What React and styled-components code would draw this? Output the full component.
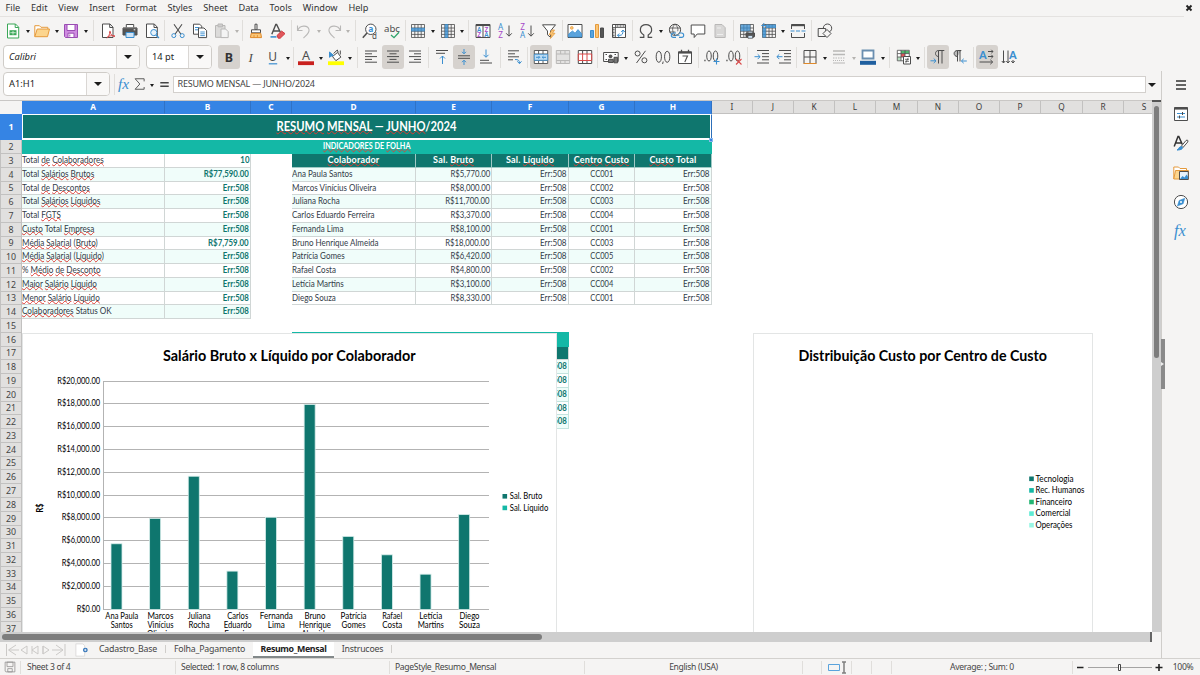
import React from "react";
import styled, { createGlobalStyle, css } from "styled-components";

const UI = '"Noto Sans", "Liberation Sans", sans-serif';
const CELL = 'Lato, "Liberation Sans", sans-serif';
const TEAL = "#0f766e";
const MINT = "#14b8a6";
const BLUE = "#3584e4";

const Global = createGlobalStyle`
  * { box-sizing: border-box; }
  body { margin: 0; background: #f5f4f3; font-family: ${UI}; color: #3a3a3a; }
`;

const Window = styled.div`
  width: 1200px;
  height: 675px;
  display: flex;
  flex-direction: column;
  overflow: hidden;
  background: #f5f4f3;
`;

/* ---------- menu bar ---------- */
const MenuBar = styled.nav`
  flex: none;
  height: 17px;
  margin-right: 16px;
  padding: 0 0 0 5.5px;
  display: flex;
  align-items: center;
  gap: 10.8px;
  border-bottom: 1px solid #e4e2e0;
  font-size: 9.2px;
  color: #333;
`;
const MenuItem = styled.span`
  white-space: nowrap;
  line-height: 16px;
`;
const CloseDoc = styled.span`
  margin-left: auto;
  margin-right: -10px;
  height: 16px;
  display: flex;
  align-items: center;
`;

/* ---------- toolbars ---------- */
const Toolbar = styled.div`
  display: flex;
  align-items: center;
  flex: none;
  height: ${(p) => p.$h}px;
  padding-left: ${(p) => p.$pad}px;
  margin-bottom: ${(p) => p.$after || 0}px;
`;
const ToolButton = styled.span`
  flex: none;
  width: ${(p) => p.$w || 22}px;
  height: 24px;
  border-radius: 3px;
  display: flex;
  align-items: center;
  justify-content: center;
  background: ${(p) => (p.$active ? "#d6d2ce" : "transparent")};
`;
const CaretSlot = styled.span`
  flex: none;
  width: ${(p) => p.$w || 7.2}px;
  display: flex;
  justify-content: center;
  padding-top: 2px;
`;
const CaretShape = styled.i`
  border: ${(p) => p.$s || 2.6}px solid transparent;
  border-top: ${(p) => (p.$s || 2.8) * 1.1}px solid ${(p) => (p.$off ? "#b5b3b0" : "#1c1c1c")};
  border-bottom: 0;
`;
const Sep = styled.span`
  flex: none;
  width: ${(p) => p.$w}px;
  height: 21px;
  display: flex;
  justify-content: center;
  &::after {
    content: "";
    width: 1px;
    background: #e0dedb;
  }
`;
const Combo = styled.span`
  flex: none;
  display: flex;
  width: ${(p) => p.$w}px;
  height: 24px;
  margin-right: ${(p) => p.$gap}px;
  border: 1px solid #cfccc8;
  border-radius: 4px;
  background: #fff;
  overflow: hidden;
  font-size: 9.3px;
  color: #262626;
`;
const ComboText = styled.span`
  flex: 1;
  padding-left: 5px;
  line-height: 21px;
  font-style: ${(p) => (p.$italic ? "italic" : "normal")};
`;
const ComboArrow = styled.span`
  width: ${(p) => p.$w}px;
  border-left: 1px solid #dad7d4;
  background: #f9f8f7;
  display: flex;
  align-items: center;
  justify-content: center;
`;

/* ---------- work area ---------- */
const Middle = styled.div`
  display: flex;
  flex: none;
  height: 587px;
`;
const Main = styled.div`
  width: 1162px;
  flex: none;
  border-right: 1px solid #cfcdca;
  display: flex;
  flex-direction: column;
`;
const FormulaBar = styled.div`
  flex: none;
  height: 29px;
  padding: 0 0 3px 3px;
  display: flex;
  align-items: center;
`;
const FormulaInput = styled.div`
  flex: none;
  width: 973px;
  height: 17px;
  margin-left: 1px;
  border: 1px solid #d3d0cd;
  background: #fff;
  padding-left: 3.5px;
  font-size: 9px;
  line-height: 14.5px;
  letter-spacing: -0.19px;
  color: #444;
`;
const SheetArea = styled.div`
  display: flex;
  flex: none;
  height: 532px;
`;
const Grid = styled.div`
  position: relative;
  width: 1152px;
  height: 532px;
  overflow: hidden;
  background: #fff;
`;
const HeaderRow = styled.div`
  display: flex;
  height: 14px;
  border-top: 1px solid #c9c7c5;
  background: #f5f4f3;
`;
const Corner = styled.div`
  width: 22px;
  flex: none;
`;
const ColHead = styled.div`
  flex: none;
  width: ${(p) => p.$w}px;
  height: 13px;
  text-align: center;
  font-size: 8.3px;
  line-height: 12px;
  font-weight: ${(p) => (p.$on ? 700 : 400)};
  color: ${(p) => (p.$on ? "#fff" : "#3c3c3c")};
  background: ${(p) => (p.$on ? BLUE : "#e1e0df")};
  border-right: 1px solid ${(p) => (p.$on ? "#2f72c6" : "#c2c1c0")};
  border-bottom: 1px solid ${(p) => (p.$on ? BLUE : "#c2c1c0")};
`;
const Row = styled.div`
  display: flex;
  height: ${(p) => p.$h}px;
`;
const RowHead = styled.div`
  flex: none;
  width: 22px;
  text-align: center;
  font-size: 8.8px;
  line-height: ${(p) => p.$h}px;
  font-weight: ${(p) => (p.$on ? 700 : 400)};
  color: ${(p) => (p.$on ? "#fff" : "#444")};
  background: ${(p) => (p.$on ? BLUE : "#e1e0df")};
  border: 0 solid #c2c1c0;
  border-width: 0 1px 1px 1px;
  ${(p) => p.$on && css`border-color: ${BLUE};`}
`;
const Cell = styled.div`
  flex: none;
  width: ${(p) => p.$w}px;
  padding: 0 ${(p) => (p.$align === "right" ? 1 : 0.4)}px;
  overflow: hidden;
  white-space: pre;
  font-family: ${CELL};
  font-size: 9px;
  letter-spacing: ${(p) => p.$ls || 0}px;
  line-height: ${(p) => p.$lh || 12.5}px;
  text-align: ${(p) => p.$align || "left"};
  font-weight: ${(p) => (p.$bold ? 700 : 400)};
  color: ${(p) => p.$color || "#333c48"};
  background: ${(p) => p.$bg || "transparent"};
  border: 0 solid ${(p) => p.$line || "#d0d6d5"};
  border-width: ${(p) => (p.$edge ? "0 1px 1px 0" : "0")};
`;
const TitleCell = styled(Cell)`
  font-size: 12.4px;
  border: 1px solid #fff;
  border-width: 1px 1px 2px 1px;
  border-right-color: #2d6fb9;
  box-shadow: inset -1px 0 0 #fff;
`;
const SectionCell = styled(Cell)`
  font-size: 8.8px;
`;
const Narrow = styled.span`
  display: inline-block;
  transform: scaleX(${(p) => p.$k});
  transform-origin: ${(p) => p.$from || "left"} center;
`;
const Typo = styled.span`
  text-decoration: underline wavy #dd3a32 0.6px;
  text-underline-offset: -1px;
  text-decoration-skip-ink: none;
`;
const HiddenEdge = styled.div`
  flex: none;
  width: 277px;
  border-bottom: 1px solid ${MINT};
`;
const FillHandle = styled.i`
  position: absolute;
  left: 709px;
  top: 38px;
  width: 4px;
  height: 4px;
  background: ${BLUE};
  border: 1px solid #8bb6ee;
`;
const ChartFrame = styled.div`
  position: absolute;
  left: ${(p) => p.$x}px;
  top: 233px;
  width: ${(p) => p.$w}px;
  height: 320px;
  background: #fff;
  border: 1px solid #e3e5e5;
`;
const ChartSvg = styled.svg`
  display: block;
  font-family: ${CELL};
`;
const VScroll = styled.div`
  width: 9px;
  height: 532px;
  background: #cecece;
  padding: 4px 1.5px;
  border-top: 2px solid #555;
`;
const VThumb = styled.div`
  width: 5.5px;
  height: 252px;
  border-radius: 3px;
  background: #7d7d7d;
`;
const HScroll = styled.div`
  flex: none;
  width: 1152px;
  height: 10px;
  background: #cecece;
  padding: 2px 0 0 2px;
  border-right: 2px solid #666;
`;
const HThumb = styled.div`
  width: 540px;
  height: 6px;
  border-radius: 3px;
  background: #7d7d7d;
`;
const TabBar = styled.div`
  flex: none;
  height: 16px;
  display: flex;
  align-items: stretch;
  font-size: 8.8px;
  line-height: 14px;
  color: #454545;
`;
const TabTools = styled.div`
  width: 91px;
  display: flex;
  align-items: center;
  gap: 8px;
  padding-left: 5px;
`;
const Tab = styled.div`
  width: ${(p) => p.$w}px;
  text-align: center;
  white-space: nowrap;
  font-weight: ${(p) => (p.$on ? 700 : 400)};
  letter-spacing: ${(p) => (p.$on ? -0.35 : -0.2)}px;
  color: ${(p) => (p.$on ? "#222" : "#454545")};
  background: ${(p) => (p.$on ? "#fff" : "transparent")};
  border-bottom: ${(p) => (p.$on ? "2px solid #83898a" : "0")};
`;
const TabSep = styled.i`
  width: 1px;
  height: 8px;
  margin-top: 3px;
  background: #cfcdca;
`;

/* ---------- sidebar ---------- */
const SideBar = styled.aside`
  flex: 1;
  position: relative;
  display: flex;
  flex-direction: column;
  align-items: center;
  padding: 6px 0 0 0;
  gap: 13.2px;
`;
const SplitHandle = styled.i`
  position: absolute;
  left: -1px;
  top: 268px;
  width: 4px;
  height: 50px;
  background: #8a8a8a;
  &::after {
    content: "";
    position: absolute;
    left: 0;
    top: 23px;
    border: 2px solid transparent;
    border-left: 3px solid #eee;
    border-right: 0;
  }
`;

/* ---------- status bar ---------- */
const StatusBar = styled.footer`
  height: 17px;
  flex: none;
  border-top: 1px solid #d3d1ce;
  display: flex;
  align-items: center;
  font-size: 8.6px;
  color: #454545;
`;
const StatusCell = styled.div`
  flex: none;
  width: ${(p) => p.$w}px;
  height: 13px;
  display: flex;
  align-items: center;
  justify-content: ${(p) => (p.$left ? "flex-start" : "center")};
  padding-left: ${(p) => p.$pad || 0}px;
  letter-spacing: -0.34px;
  border-right: ${(p) => (p.$open ? "0" : "1px solid #e0dedb")};
  white-space: nowrap;
`;

/* ---------- icons ---------- */
const G = "#4d4d4d";
const B = "#3b8fd0";
const L = "#b9b8b7";
const lines = (rows, c = G) => rows.map(([x1, x2, y]) => <path key={y} d={`M${x1} ${y}H${x2}`} stroke={c} />);
const table = (c = G) => <path d="M1.5 1.5h13v13h-13zM1.5 5h13M1.5 8.2h13M1.5 11.4h13M4.8 1.5v13M8 1.5v13M11.2 1.5v13" stroke={c} strokeWidth=".8" />;
const T = ({ x, y, s, c, children, w = 400, i, f = UI, tl }) => (
  <text x={x} y={y} fontSize={s} fill={c} stroke="none" fontWeight={w} fontStyle={i ? "italic" : "normal"} fontFamily={f} textLength={tl} lengthAdjust="spacingAndGlyphs">{children}</text>
);

const ICONS = {
  new: <><path d="M2.5 1h8l3.2 3.2V15H2.5z" stroke="#3aa757" fill="#fff" /><path d="M10.2 1v3.5h3.5" stroke="#3aa757" /><path d="M4.5 7.2h7v5h-7z" fill="#3aa757" stroke="none" /><path d="M5.3 9.7h5.4M8 8v3.6" stroke="#dff3e3" strokeWidth=".8" /></>,
  open: <><path d="M.8 13.5V2.7h4.6l1.6 1.6h6.8v3" stroke="#e59a3c" fill="#fff" /><path d="M.8 13.7 3.2 6h12.3l-2 7.7z" fill="#fcd58e" stroke="#e59a3c" /></>,
  save: <><path d="M1.5 1.5h13v13h-12l-1-1z" fill="#cf8be0" stroke="#9a4db3" /><path d="M4 1.5h8v6H4z" fill="#fff" stroke="#9a4db3" /><path d="M5 10.2h6v4.3H5z" fill="#fff" stroke="#9a4db3" /><path d="M6.8 11.5v2" stroke="#9a4db3" /></>,
  pdf: <><path d="M2.5 1h7.5l3 3.2V14.5H2.5z" fill="#fff" stroke={G} /><path d="M9.7 1v3.5H13" stroke={G} /><path d="M7 15.3c2-1.5 2.8-4.6 2.6-6.5-.2-1 .9-.9.8 0-.3 2.4 2 4.7 4.6 4.7M7.4 13.7c2-.9 4.6-1.2 7.4-1" stroke="#d94b4b" /></>,
  print: <><path d="M4.3 4.5v-3h7.4v3" stroke={G} fill="#fff" /><path d="M1 5h14v7H1z" fill="#555" stroke={G} /><path d="M1 5h14" stroke="#777" /><path d="M4 9.5h8v5H4z" fill="#cfe4f6" stroke={B} /><path d="M11.7 6.8h1.6" stroke="#fff" /></>,
  preview: <><path d="M2.5 1h7.8l3 3.2V14.5H2.5z" fill="#fff" stroke={G} /><path d="M10 1v3.5h3.3" stroke={G} /><circle cx="9.8" cy="9.6" r="3.1" fill="#e6f2fb" stroke={B} /><path d="m12 12 3 3" stroke={B} strokeWidth="1.3" /></>,
  cut: <><path d="M4 1.2 10.8 11M12 1.2 5.2 11" stroke={G} strokeWidth="1.1" /><circle cx="3.8" cy="12.6" r="2" stroke={B} /><circle cx="12.2" cy="12.6" r="2" stroke={B} /></>,
  copy: <><path d="M1.5 1.2h6.2l2 2v8h-8.2z" stroke={G} fill="#fff" /><path d="M3 4.5h4M3 6.8h4" stroke={B} /><path d="M6.5 5h5.5l2.6 2.6v7H6.5z" stroke={G} fill="#fff" /><path d="M8.3 9h4.5M8.3 10.8h4.5M8.3 12.6h4.5" stroke={B} strokeWidth=".9" /></>,
  paste: <><path d="M1.5 2.5h9.5v11.8H1.5z" fill="#dcdbda" stroke={L} /><path d="M4 1h4.5v2.8H4z" fill="#cfcecd" stroke={L} /><path d="M7 6h4.6l2.6 2.6v6H7z" fill="#f4f4f4" stroke={L} /></>,
  brush: <><path d="M7 1.2h2v5.5H7z" stroke={G} /><path d="M3.5 6.8h9v3h-9z" stroke={G} fill="#fff" /><path d="M3.2 10.4h9.6l.7 4.2H2.4z" fill="#fbc677" stroke="#e08a2a" /><path d="M6 12v2.5M9.4 12v2.5" stroke="#e08a2a" strokeWidth=".8" /></>,
  clear: <><path d="M1.8 11.3 5.8 1.5h.8l4 8.2M3.3 8h6" stroke={G} strokeWidth="1.4" /><path d="M.5 13.9h6" stroke={B} strokeWidth="1.6" /><path d="m7 12.5 4.6-4.4 3.4 2.5-4.8 4.6H8.2z" fill="#e0575b" stroke="#d13a40" /></>,
  undo: <path d="M1.5 2.5v5h5M1.8 7.3C3.5 2 12 1.7 13 6.5c.7 3.4-2 5.2-5.5 8.5" stroke={L} strokeWidth="1.1" />,
  redo: <path d="M14.5 2.5v5h-5M14.2 7.3C12.5 2 4 1.7 3 6.5c-.7 3.4 2 5.2 5.5 8.5" stroke={L} strokeWidth="1.1" />,
  find: <><circle cx="8.8" cy="6.3" r="5.2" stroke={G} fill="#fff" /><path d="M5 10 .8 14.8" stroke={G} strokeWidth="1.5" /><T x={6.2} y={8.8} s={8.5} c={B} w={700}>a</T><T x={10} y={15.8} s={8} c={G}>d</T></>,
  abc: <><T x={0} y={8.5} s={8.8} c={G} tl={16}>abc</T><path d="m7 12 3 2.7 5-5.5" stroke="#2ea36b" strokeWidth="1.3" /></>,
  rows: <>{table()}<path d="M1 4.8h14v3.6H1z" fill="#3b8fd0" fillOpacity=".8" stroke="none" /></>,
  cols: <>{table()}<path d="M4.7 1h3.4v14H4.7z" fill="#3b8fd0" fillOpacity=".8" stroke="none" /></>,
  sort: <><path d="M1 1.5h14v13H1zM8 1.5v13" stroke={G} fill="#fff" /><path d="M1 2.3h14" stroke={G} strokeWidth="1.6" /><T x={2} y={8.7} s={6.4} c={B} w={600}>A</T><T x={2.2} y={14} s={6.4} c="#a64ac9" w={600}>Z</T><T x={9.4} y={8.7} s={6.4} c="#a64ac9" w={600}>Z</T><T x={9.2} y={14} s={6.4} c={B} w={600}>A</T></>,
  asc: <><T x={1} y={7} s={8.2} c={B}>A</T><T x={1.3} y={15} s={8.2} c="#a64ac9">Z</T><path d="M12 2.5V13M9.2 10.3 12 13.2l2.8-2.900" stroke={G} /></>,
  desc: <><T x={1.3} y={7} s={8.2} c="#a64ac9">Z</T><T x={1} y={15} s={8.2} c={B}>A</T><path d="M12 2.5V13M9.2 10.3 12 13.2l2.8-2.900" stroke={G} /></>,
  filter: <><path d="M1.5 1.8h13L9.5 8v6.3l-3-2.5V8z" stroke={G} fill="#fff" /><path d="m11 7-3 4.7h2.6L9.4 15.5l4.6-5.200h-2.500l2-3.300z" fill="#fbc677" stroke="#e59a3c" strokeWidth=".8" /></>,
  image: <><path d="M1 1.5h14v13H1z" stroke={G} fill="#fff" /><path d="M1.6 11 5.5 8l2.6 2.2L11 6.6l3.5 4V14H1.6z" fill="#5aa3dc" stroke={B} strokeWidth=".8" /><circle cx="4.8" cy="4.9" r="1.4" fill="#fbc677" stroke="#e59a3c" strokeWidth=".7" /></>,
  chart: <><path d="M1.5 7.5h3v7h-3z" fill="#5aa3dc" stroke={B} /><path d="M6.5 1.5h3v13h-3z" fill="#fbc677" stroke="#e59a3c" /><path d="M11.5 5h3v9.5h-3z" fill="#555" stroke={G} /></>,
  pivot: <><path d="M1.5 1.5h13v13h-13z" stroke={G} fill="#fff" /><path d="M1.5 4.5h13M4.5 1.5v13" stroke={G} strokeWidth=".8" /><path d="M2.8 5.5v8.5M5.5 3h8.5" stroke="#777" strokeWidth="1.6" strokeDasharray="2 1" /><path d="M6.5 12.3H9c2 0 3-1.3 3-4.8M6.5 12.3l1.8-1.8M6.5 12.3l1.8 1.8M12 7l-1.8 2M12 7l1.8 2" stroke={B} /></>,
  omega: <path d="M1.8 14.3h4V12C.6 9 1.4 1.7 8 1.7S15.4 9 10.2 12v2.3h4" stroke={G} strokeWidth="1.2" />,
  link: <><circle cx="7" cy="6.8" r="5.6" stroke={G} /><path d="M1.4 5h11.2M1.4 9h6M7 1.2c-3.2 3-3.2 7 0 11M7 1.2c3.2 3 3.2 5 2.6 7" stroke={G} strokeWidth=".8" /><path d="M8 10H5.5a2.2 2.2 0 0 0 0 4.4H8M11 10h2.5a2.2 2.2 0 0 1 0 4.4H11M7.5 12.2h4" stroke={B} strokeWidth="1.1" /></>,
  comment: <path d="M1.2 2h13.6v9H7.2l-3 3.5V11h-3z" stroke={G} fill="#fff" />,
  hf: <><path d="M3 1.5h7l3.2 3.2v9.8H3z" fill="#d8d7d6" stroke={L} /><path d="M5 5h4M5 11.5h6" stroke="#eee" /></>,
  define: <>{table()}<path d="M1.5 1.5h9.7v6.7H1.5z" fill="#3b8fd0" fillOpacity=".75" stroke="none" /><path d="M7 10h8.5v3.7H7z" fill="#555" stroke={G} /><path d="M9 8.3h4.6V10H9zM9 12.5h4.6v2.8H9z" fill="#cfe4f6" stroke={G} strokeWidth=".7" /></>,
  freeze: <>{table()}<path d="M5 1.5h10V5H5zM1.5 5h3.4v9.5H1.5z" fill="#3b8fd0" fillOpacity=".85" stroke="none" /><path d="M2.8 0v5M.3 2.5h5" stroke={B} /></>,
  split: <><path d="M1.5 6V1.5h13V6M1.5 10v4.5h13V10" stroke={G} /><path d="M1.5 2.3h13" stroke={G} strokeWidth="1.8" /><path d="M.5 8h15" stroke={B} strokeDasharray="4 1.5" /></>,
  shapes: <><circle cx="10.5" cy="5.2" r="4.2" stroke={G} /><path d="M1.2 5.5h7.5v8H1.2z" stroke={G} fill="#f5f4f3" /><path d="m10 6.5 4 4-4 4-4-4z" stroke={G} fill="#f5f4f3" /></>,
  bold: <T x={3.8} y={12.6} s={12.4} c="#333" w={700}>B</T>,
  italic: <T x={5.5} y={12.8} s={13} c={G} i f='"Liberation Serif", serif'>I</T>,
  underline: <><T x={3.3} y={11.8} s={12} c={G}>U</T><path d="M3.8 14.8h8.4" stroke={B} strokeWidth="1.2" /></>,
  color: <><T x={4} y={10.5} s={12.5} c={G}>A</T><path d="M0 12.3h16v3.8H0z" fill="#c9211e" stroke="none" /></>,
  hilite: <><path d="M0 12.3h16v3.8H0z" fill="#ffff00" stroke="none" /><path d="m4.5 7.5 5-4 3.4 4.6-5 3.6z" fill="#fff" stroke={G} /><path d="M5.5 4.5 9.3 1l1 2.5M12.3 5.5V1.5" stroke={G} /><path d="M1.5 8.5V3l4 3.4" fill={B} stroke={B} /></>,
  left: lines([[2, 14, 2], [2, 9, 4.8], [2, 14, 7.6], [2, 9, 10.4], [2, 14, 13.2]]),
  center: lines([[2, 14, 2], [4.5, 11.5, 4.8], [2, 14, 7.6], [4.5, 11.5, 10.4], [2, 14, 13.2]]),
  right: lines([[2, 14, 2], [7, 14, 4.8], [2, 14, 7.6], [7, 14, 10.4], [2, 14, 13.2]]),
  top: <>{lines([[2, 14, 1.5], [2, 11, 4.3]])}<path d="M8.5 15V7M6 9.5 8.5 7 11 9.5" stroke={B} /></>,
  mid: <>{lines([[2, 14, 6.8], [2, 14, 9.3]])}<path d="M8 0v4.5M6 2.8 8 4.8l2-2M8 16v-4.5M6 13.2l2-2 2 2" stroke={B} /></>,
  bottom: <>{lines([[2, 11, 11.3], [2, 14, 14]])}<path d="M8 .5V8M5.5 5.8 8 8.3l2.5-2.5" stroke={B} /></>,
  wrap: <>{lines([[2, 13, 1.8], [2, 9, 4.8], [2, 13, 7.8], [2, 7, 10.8]])}<path d="M9 10.5c3 0 4.5.5 4.5 3.7M11.3 12.3l2.2 2.4 2-2.4" stroke={B} /></>,
  mergec: <><path d="M1.3 1.5h13.4v13H1.3zM1.3 5h13.4M1.3 11.5h13.4M5.6 1.5V5M10 1.5V5M5.6 11.5v3M10 11.5v3" stroke={G} fill="#fff" strokeWidth=".9" /><path d="M1.3 5.3h13.4v6H1.3z" fill="#bcdcf4" stroke={B} strokeWidth=".8" /><path d="M3 8.3h3.5M13 8.3H9.5M5.5 7l1.3 1.3L5.5 9.6M10.5 7 9.2 8.3l1.3 1.3" stroke={B} /></>,
  merge: <path d="M1.3 1.5h13.4v13H1.3zM1.3 5h13.4M1.3 11.5h13.4M5.6 1.5V5M10 1.5V5M5.6 11.5v3M10 11.5v3" stroke={L} fill="#e3e2e1" />,
  splitc: <><path d="M1.3 1.5h13.4v13H1.3zM5.6 1.5V5M10 1.5V5M5.6 11.5v3M10 11.5v3" stroke={G} fill="#fff" /><path d="M1.3 5h13.4v6.5H1.3zM5.6 5v6.5M10 5v6.5" stroke="#d94b4b" /></>,
  money: <><path d="M.6 3.5h14.6v9H.6z" stroke={G} fill="#fff" /><path d="M2.5 5.5h1.5M11.5 5.5H13M2.5 10.5H4" stroke={G} /><circle cx="7.5" cy="7.3" r="1.9" fill="#555" stroke="none" /><path d="M5.5 10.3h4.7v3.2H5.5zM11 8.3h3.6v5.5H11z" fill="#777" stroke={G} /></>,
  percent: <><circle cx="4.6" cy="4.5" r="2.5" stroke={G} /><circle cx="11.4" cy="11.3" r="2.5" stroke={G} /><path d="M12.5 1.8 3.5 14" stroke={G} /></>,
  number: <><path d="M3.8 2.3c3.5 0 3.5 11 0 11s-3.5-11 0-11zM12.2 2.3c3.5 0 3.5 11 0 11s-3.5-11 0-11z" stroke={G} /><path d="M8.2 12.5 7.6 15" stroke={G} /></>,
  date: <><path d="M1.5 2.8h13v11.7h-13z" stroke={G} fill="#fff" /><path d="M1.5 3.6h13" stroke={G} strokeWidth="2" /><path d="M4.5.8v3M11.5.8v3" stroke={G} strokeWidth="1.3" /><path d="M5.5 7h5l-2.7 6" stroke={G} strokeWidth="1.1" /></>,
  adddec: <><path d="M5 2c3 0 3 10 0 10S2 2 5 2zM11.5 2c3 0 3 10 0 10S8.5 2 11.5 2z" stroke={G} /><path d="M.3 11.5h1.3" stroke={G} strokeWidth="1.3" /><path d="M12.5 9.5v6M9.5 12.5h6" stroke={B} strokeWidth="1.1" /></>,
  deldec: <><path d="M5 2c3 0 3 10 0 10S2 2 5 2zM11.5 2c3 0 3 10 0 10S8.5 2 11.5 2z" stroke={G} /><path d="M.3 11.5h1.3" stroke={G} strokeWidth="1.3" /><path d="m10 10 5.5 5.5M15.5 10 10 15.5" stroke="#d94b4b" strokeWidth="1.1" /></>,
  indent: <>{lines([[3, 15, 1.5], [8, 15, 4.6], [8, 15, 7.7], [8, 15, 10.8], [3, 15, 14]])}<path d="M.5 7.7H6M3.7 5.3 6.1 7.7l-2.4 2.4" stroke={B} /></>,
  outdent: <>{lines([[3, 15, 1.5], [8, 15, 4.6], [8, 15, 7.7], [8, 15, 10.8], [3, 15, 14]])}<path d="M6.5 7.7H1M3.3 5.3.9 7.7l2.4 2.4" stroke={B} /></>,
  borders: <><path d="M2 14.5v-13h12v13M8 1.5v13M2 8h12" stroke={G} /><path d="M1.5 14.5h13" stroke="#e08a2a" /></>,
  lstyle: <><path d="M2 2h12M2 5.5h12" stroke={L} strokeWidth="1.6" /><path d="M2 9h12" stroke={L} strokeDasharray="1.5 1" /><path d="M2 11.5h12" stroke={L} strokeDasharray="1 1" /><path d="M2 14h12" stroke={L} /></>,
  lcolor: <><path d="M2.5 1.5h11v8h-11z" stroke="#6b8fb0" strokeWidth="1.8" fill="#fff" /><path d="M0 11.8h16v4H0z" fill="#1f5f9f" stroke="none" /></>,
  cond: <><path d="M1.3 1.3h12v10.5h-12z" fill="#fff" stroke="none" /><path d="M5 1.8h8v2.7H5z" fill="#4fb86c" stroke="none" /><path d="M5 4.7h4V8H5z" fill="#e0575b" stroke="none" /><path d="M1.6 8H5v3.5H1.6z" fill="#b7dfc1" stroke="none" /><path d="M1.3 1.3h12v10.5h-12zM5 1.3v10.5M9 1.3v10M1.3 4.6h12M1.3 8h12" stroke={G} strokeWidth=".8" /><path d="M7.5 7.5h7v7.5h-7z" fill="#fff" stroke={G} /><path d="M9 10.3h4M9 12.3h4M12.2 8.8l-2.4 5" stroke={G} strokeWidth=".8" /></>,
  ltr: <><path d="M8.5 7.5C4.5 7.5 4.5 1.5 8.5 1.5h5.8M8.5 1.5v13M12 1.5v13" stroke={G} fill="none" /><path d="M.5 11.8H6M3.7 9.5 6 11.8l-2.3 2.3" stroke={B} /></>,
  rtl: <><path d="M5.5 7.5C1 7.5 1 1.5 5.5 1.5h3.8M5.5 1.5v11M8 1.5v11" stroke={G} fill="#bbb" /><path d="M14.8 12H9.5M11.7 9.8 9.4 12l2.3 2.2" stroke={B} /></>,
  texth: <><T x={0} y={10} s={11.5} c={B} w={600}>A</T><path d="M9 2.5h5M9 7.5h5M.5 13h13M12.3.8 14 2.5l-1.7 1.7M12.3 5.8 14 7.5l-1.7 1.7M11.3 10.8l2.4 2.2-2.4 2.2" stroke={G} /></>,
  textv: <><T x={8} y={10} s={11.5} c={B} w={600}>A</T><path d="M2.5 1.5V14M7 1.5V14M12 11v3M.8 12 2.5 14l1.7-2M5.3 12 7 14l1.7-2M10.3 12l1.7 2 1.7-2" stroke={G} /></>,
  fx: <T x={1} y={12.5} s={16.5} c={B} i f='"Liberation Serif", serif'>fx</T>,
  sum: <path d="M13.5 4.5V1h-12l6.3 7-6.3 7h12v-3" stroke={G} strokeWidth="1.2" />,
  equal: <path d="M3.5 6.2h9M3.5 9.8h9" stroke="#444" strokeWidth="1.5" />,
  burger: <path d="M3 4h10M3 8h10M3 12h10" stroke="#333" strokeWidth="1.3" />,
  props: <><path d="M1.5 1.5h13v13h-13z" stroke={G} fill="#fff" /><path d="M1.5 2.5h13" stroke={G} strokeWidth="2.2" /><path d="M4 7.5h8M4 11h8" stroke={B} /><path d="M9.5 6v3M6.5 9.5v3" stroke={G} /></>,
  styles: <><path d="M1.2 11.5 5 1.5h.8l3.5 8M2.8 8h5.7" stroke="#333" strokeWidth="1.5" /><path d="m8.5 11 4.5-5.5c1.5-1 2.5 0 1.7 1.5L10 12.5z" stroke={G} fill="#fff" /><path d="M4 15c2-.3 1.5-3.5 4.5-3.5 2 1.5 1 3.5-4.5 3.5z" fill={B} stroke={B} /></>,
  gallery: <><path d="M.8 14V2h4.7l1.5 1.5h6.5V6" stroke="#e59a3c" fill="#fff" /><path d="M.8 14 2.5 5.5h13V14z" fill="#fcd58e" stroke="#e59a3c" /><path d="M6.5 6.5h8.8v8H6.5z" fill="#e6f2fb" stroke={G} /><path d="m7 14 2.5-3 2 1.5L13.5 9.5l1.5 2.2V14z" fill={B} stroke="none" /></>,
  nav: <><circle cx="8" cy="8" r="6.6" stroke={G} fill="#fff" /><path d="m11.8 4.2-1.6 5.5-5.8 2.4 1.7-5.6z" fill={B} stroke={B} strokeWidth=".5" /><circle cx="8" cy="8" r="1" fill="#fff" stroke="none" /></>,
  newtab: <><path d="M1 1h8l2 2v12H1z" fill="#fff" stroke="#dad9d8" /><circle cx="11.8" cy="8" r="2.7" fill="#2f72b8" stroke="none" /><path d="M11.8 6.6v2.8M10.4 8h2.8" stroke="#fff" strokeWidth=".9" /></>,
  disk: <path d="M1.5 1.5h13v13h-12l-1-1zM4 1.5h8v6H4zM5 10.2h6v4.3H5z" stroke="#8d8c8b" fill="none" />,
  close: <path d="m4 4 8 8M12 4l-8 8" stroke="#222" strokeWidth="3" />,
};

const IconSvg = styled.svg`
  flex: none;
  overflow: visible;
`;
const Icon = ({ n, size = 16 }) => (
  <IconSvg width={size} height={size} viewBox="0 0 16 16" fill="none" strokeWidth="1">{ICONS[n]}</IconSvg>
);
const Caret = ({ off, w }) => (
  <CaretSlot $w={w}><CaretShape $off={off} /></CaretSlot>
);

/* "|w" is a separator of that width, "v" a drop-down caret, "x" a disabled one, "*" an active button */
const TOP = "new v open v save v |7.4 pdf print preview |4 cut copy paste x |5 brush clear |4.3 undo x redo x |7.6 find abc |4 rows v cols v |6 sort asc desc filter |4.6 image chart pivot |4.2 omega v8.3 link comment hf |5 define freeze v split |5 shapes".split(" ");
const FORMAT = "*bold italic underline v |4.3 color v hilite v |6.6 left *center right |5 top *mid bottom |5.5 wrap |5 *mergec merge splitc |4 money v8 percent number date |5 adddec deldec |6 indent outdent |4 borders v lstyle x lcolor v |6 cond v |5.5 *ltr rtl |5.2 *texth textv".split(" ");

const Tools = ({ items }) =>
  items.map((t, i) => {
    if (t[0] === "|") return <Sep key={i} $w={+t.slice(1)} />;
    if (/^v[\d.]*$/.test(t)) return <Caret key={i} w={+t.slice(1) || undefined} />;
    if (t === "x") return <Caret key={i} off />;
    const on = t[0] === "*";
    return <ToolButton key={i} $active={on}><Icon n={on ? t.slice(1) : t} /></ToolButton>;
  });

/* ---------- sheet data ---------- */
const COLS = [["A", 143], ["B", 86], ["C", 41], ["D", 124], ["E", 76], ["F", 77], ["G", 66], ["H", 77], ["I", 41], ["J", 41], ["K", 41], ["L", 41], ["M", 42], ["N", 41], ["O", 41], ["P", 41], ["Q", 42], ["R", 41], ["S", 41]];
const METRICS = [
  ["Total [de] [Colaboradores]", "10"],
  ["Total [Salários] [Brutos]", "R$77,590.00"],
  ["Total [de] [Descontos]", "Err:508"],
  ["Total [Salários] [Líquidos]", "Err:508"],
  ["Total [FGTS]", "Err:508"],
  ["[Custo] Total [Empresa]", "Err:508"],
  ["[Média] [Salarial] ([Bruto])", "R$7,759.00"],
  ["[Média] [Salarial] ([Líquido])", "Err:508"],
  ["% [Médio] [de] [Desconto]", "Err:508"],
  ["[Maior] [Salário] [Líquido]", "Err:508"],
  ["[Menor] [Salário] [Líquido]", "Err:508"],
  ["[Colaboradores] Status OK", "Err:508"],
];
const PEOPLE = [
  ["Ana Paula Santos", "R$5,770.00", "CC001"],
  ["Marcos Vinícius Oliveira", "R$8,000.00", "CC002"],
  ["Juliana Rocha", "R$11,700.00", "CC003"],
  ["Carlos Eduardo Ferreira", "R$3,370.00", "CC004"],
  ["Fernanda Lima", "R$8,100.00", "CC001"],
  ["Bruno Henrique Almeida", "R$18,000.00", "CC003"],
  ["Patrícia Gomes", "R$6,420.00", "CC005"],
  ["Rafael Costa", "R$4,800.00", "CC002"],
  ["Letícia Martins", "R$3,100.00", "CC004"],
  ["Diego Souza", "R$8,330.00", "CC001"],
];
const HEADS = ["[Colaborador]", "Sal. [Bruto]", "Sal. [Líquido]", "[Centro] [Custo]", "[Custo] Total"];
const rowTop = (n) => (n === 1 ? 114 : n === 2 ? 140 : 154 + Math.round((n - 3) * 13.76));
const rowHeight = (n) => rowTop(n + 1) - rowTop(n);
const band = (n) => (n % 2 === 0 ? "#f0fdfa" : "#fff");

const spell = (s) =>
  s.split(/(\[[^\]]+\])/).map((p, i) => (p[0] === "[" ? <Typo key={i}>{p.slice(1, -1)}</Typo> : p));

function Cells({ n }) {
  if (n === 1) return <TitleCell $w={690} $lh={24} $align="center" $bold $color="#fff" $bg={TEAL}><Narrow $k={0.905} $from="center">{spell("[RESUMO] [MENSAL] — [JUNHO]/2024")}</Narrow></TitleCell>;
  if (n === 2) return <SectionCell $w={690} $lh={12} $align="center" $bold $color="#fff" $bg={MINT}><Narrow $k={0.83} $from="center">{spell("[INDICADORES] DE [FOLHA]")}</Narrow></SectionCell>;
  const out = [];
  const m = METRICS[n - 3];
  if (m) {
    out.push(
      <Cell key="a" $w={143} $edge $bg={band(n)}><Narrow $k={0.9}>{spell(m[0])}</Narrow></Cell>,
      <Cell key="b" $w={86} $edge $bold $align="right" $color={TEAL} $bg={band(n)}><Narrow $k={0.87} $from="right">{m[1]}</Narrow></Cell>,
      <Cell key="c" $w={41} />
    );
  } else out.push(<Cell key="abc" $w={270} />);
  if (n === 3)
    HEADS.forEach((h, i) => out.push(<Cell key={h} $w={COLS[3 + i][1]} $edge $line="#9fc9c5" $bold $align="center" $ls={0.2} $color="#fff" $bg={TEAL}>{spell(h)}</Cell>));
  const p = PEOPLE[n - 4];
  if (p) {
    const vals = [[p[0], "left", 0.89], [p[1], "right", 0.86], ["Err:508", "right", 0.9], [p[2], "center", 0.83], ["Err:508", "right", 0.9]];
    vals.forEach(([v, al, k], i) => out.push(<Cell key={i} $w={COLS[3 + i][1]} $edge $align={al} $bg={band(n)}><Narrow $k={k} $from={al}>{v}</Narrow></Cell>));
  }
  if (n === 15) out.push(<HiddenEdge key="e" />);
  if (n === 16) out.push(<Cell key="s" $w={277} $bg={MINT} />);
  if (n === 17) out.push(<Cell key="t" $w={277} $edge $bg={TEAL} />);
  if (n >= 18 && n <= 22) out.push(<Cell key="d" $w={200} />, <Cell key="f" $w={77} $edge $line="#c4e4df" $bold $align="right" $color={TEAL} $bg={band(n)}><Narrow $k={0.87} $from="right">Err:508</Narrow></Cell>);
  return out;
}

/* ---------- charts ---------- */
const BARS = [["Ana Paula", "Santos", null, 5770, 33, 22], ["Marcos", "Vinícius", "Oliveira", 8000, 26, 26], ["Juliana", "Rocha", null, 11700, 23, 21], ["Carlos", "Eduardo", "Ferreira", 3370, 21, 28], ["Fernanda", "Lima", null, 8100, 33, 17], ["Bruno", "Henrique", "Almeida", 18000, 21, 32], ["Patrícia", "Gomes", null, 6420, 26, 24], ["Rafael", "Costa", null, 4800, 20, 20], ["Letícia", "Martins", null, 3100, 23, 26], ["Diego", "Souza", null, 8330, 20, 21]];

function BarChart() {
  const y0 = 276, step = 22.78;
  return (
    <ChartSvg width="533" height="318" viewBox="0 0 533 318">
      <text x="140" y="27" fontSize="15.4" fontWeight="700" textLength="252.5" lengthAdjust="spacingAndGlyphs">Salário Bruto x Líquido por Colaborador</text>
      {Array.from({ length: 11 }, (_, i) => {
        const y = Math.floor(y0 - i * step) - 0.5;
        const tl = i === 0 ? 23.5 : i < 5 ? 38.5 : 43;
        return (
          <g key={i}>
            <path d={`M80 ${y}H466`} stroke="#b3b3b3" />
            <text x={77.2 - tl} y={y + 2.6} fontSize="8.9" textLength={tl} lengthAdjust="spacingAndGlyphs">R${(i * 2000).toLocaleString("en-US")}.00</text>
          </g>
        );
      })}
      <path d="M80.500 47V276" stroke="#b3b3b3" />
      {BARS.map(([a, b, c, v, wa, wb], i) => {
        const cx = 98.8 + i * 38.63;
        const h = (v / 2000) * step;
        return (
          <g key={a}>
            <rect x={cx - 10.8} y={y0 - h - 0.5} width="11" height={h} fill={TEAL} stroke="#d5ecea" strokeWidth=".8" />
            <text x={cx - wa / 2} y="284.8" fontSize="8.9" textLength={wa} lengthAdjust="spacingAndGlyphs">{a}</text>
            <text x={cx - wb / 2} y="293.8" fontSize="8.9" textLength={wb} lengthAdjust="spacingAndGlyphs">{b}</text>
            {c && <text x={cx - 13.5} y="302.6" fontSize="8.9" textLength="27" lengthAdjust="spacingAndGlyphs">{c}</text>}
          </g>
        );
      })}
      <text transform="translate(20 178.5) rotate(-90)" fontSize="8.8" fontWeight="700" textLength="9" lengthAdjust="spacingAndGlyphs">R$</text>
      <rect x="479.5" y="160" width="4.6" height="4.6" fill={TEAL} />
      <text x="486.8" y="165" fontSize="8.9" textLength="32.5" lengthAdjust="spacingAndGlyphs">Sal. Bruto</text>
      <rect x="479.5" y="171.6" width="4.6" height="4.6" fill={MINT} />
      <text x="486.8" y="176.6" fontSize="8.9" textLength="38.5" lengthAdjust="spacingAndGlyphs">Sal. Líquido</text>
    </ChartSvg>
  );
}

const CENTERS = [["Tecnologia", TEAL, 38], ["Rec. Humanos", MINT, 49], ["Financeiro", "#22b573", 36.5], ["Comercial", "#5eead4", 35], ["Operações", "#99f6e4", 37]];
function PieChart() {
  return (
    <ChartSvg width="338" height="318" viewBox="0 0 338 318">
      <text x="44.5" y="27" fontSize="15.4" fontWeight="700" textLength="248.5" lengthAdjust="spacingAndGlyphs">Distribuição Custo por Centro de Custo</text>
      {CENTERS.map(([label, c, tl], i) => (
        <g key={label}>
          <rect x="275.2" y={142.5 + i * 11.6} width="4.6" height="4.6" fill={c} />
          <text x="281.5" y={147.5 + i * 11.6} fontSize="8.9" textLength={tl} lengthAdjust="spacingAndGlyphs">{label}</text>
        </g>
      ))}
    </ChartSvg>
  );
}

const MENUS = ["File", "Edit", "View", "Insert", "Format", "Styles", "Sheet", "Data", "Tools", "Window", "Help"];

export default function App() {
  return (
    <Window>
      <Global />
      <MenuBar>
        {MENUS.map((m) => <MenuItem key={m}>{m}</MenuItem>)}
        <CloseDoc><Icon n="close" size={10} /></CloseDoc>
      </MenuBar>
      <Toolbar $h={27} $pad={2}><Tools items={TOP} /></Toolbar>
      <Toolbar $h={26} $pad={3} $after={1}>
        <Combo $w={137} $gap={6}><ComboText $italic>Calibri</ComboText><ComboArrow $w={23}><CaretShape $s={4} /></ComboArrow></Combo>
        <Combo $w={66} $gap={6}><ComboText>14 pt</ComboText><ComboArrow $w={23}><CaretShape $s={4} /></ComboArrow></Combo>
        <Tools items={FORMAT} />
      </Toolbar>
      <Middle>
        <Main>
          <FormulaBar>
            <Combo $w={107} $gap={3}><ComboText>A1:H1</ComboText><ComboArrow $w={23}><CaretShape $s={4} /></ComboArrow></Combo>
            <Sep $w={2} />
            <ToolButton $w={19}><Icon n="fx" size={15} /></ToolButton>
            <Icon n="sum" size={12} />
            <Caret w={11} />
            <Icon n="equal" size={15} />
            <FormulaInput>RESUMO MENSAL — JUNHO/2024</FormulaInput>
            <CaretSlot $w={12}><CaretShape $s={4} /></CaretSlot>
          </FormulaBar>
          <SheetArea>
            <Grid>
              <HeaderRow>
                <Corner />
                {COLS.map(([c, w], i) => <ColHead key={c} $w={w} $on={i < 8}>{c}</ColHead>)}
              </HeaderRow>
              {Array.from({ length: 37 }, (_, i) => i + 1).map((n) => (
                <Row key={n} $h={rowHeight(n)}>
                  <RowHead $on={n === 1} $h={rowHeight(n)}>{n}</RowHead>
                  <Cells n={n} />
                </Row>
              ))}
              <FillHandle />
              <ChartFrame $x={22} $w={535}><BarChart /></ChartFrame>
              <ChartFrame $x={753} $w={340}><PieChart /></ChartFrame>
            </Grid>
            <VScroll><VThumb /></VScroll>
          </SheetArea>
          <HScroll><HThumb /></HScroll>
          <TabBar>
            <TabTools>
              <svg width="62" height="12" viewBox="0 0 62 12" fill="none" stroke="#cbc9c7">
                <path d="M1.500 0v12M11 1 3.500 6l7.500 5M4 6h10M22 2l-6 4 6 4zM27 2v8M33 2l-6 4 6 4zM38 2v8M38 2l6 4-6 4zM51 1l7 5-7 5M58 6H47M60 0v12" />
              </svg>
              <Icon n="newtab" size={14} />
            </TabTools>
            <Tab $w={74}>Cadastro_Base</Tab><TabSep />
            <Tab $w={87}>Folha_Pagamento</Tab>
            <Tab $w={81} $on>Resumo_Mensal</Tab>
            <Tab $w={57}>Instrucoes</Tab><TabSep />
          </TabBar>
        </Main>
        <SideBar>
          <SplitHandle />
          {["burger", "props", "styles", "gallery", "nav", "fx"].map((n) => <Icon key={n} n={n} />)}
        </SideBar>
      </Middle>
      <StatusBar>
        <StatusCell $w={21}><Icon n="disk" size={12} /></StatusCell>
        <StatusCell $w={155} $left $pad={6}>Sheet 3 of 4</StatusCell>
        <StatusCell $w={214} $left $pad={5}>Selected: 1 row, 8 columns</StatusCell>
        <StatusCell $w={195} $left $pad={5}>PageStyle_Resumo_Mensal</StatusCell>
        <StatusCell $w={218}>English (USA)</StatusCell>
        <StatusCell $w={19} />
        <StatusCell $w={30}>
          <svg width="20" height="13" viewBox="0 0 20 13" fill="none"><path d="M1.500 3.500h11v6h-11z" stroke="#5aa3dc" /><path d="M17 1.500v10M15 1h4M15 12h4" stroke="#444" /></svg>
        </StatusCell>
        <StatusCell $w={20} />
        <StatusCell $w={20} />
        <StatusCell $w={181}>Average: ; Sum: 0</StatusCell>
        <StatusCell $w={94} $open>
          <svg width="86" height="13" viewBox="0 0 86 13" fill="none">
            <path d="M0 6.500h6.500M78.500 6.500h7M82 3v7" stroke="#222" strokeWidth="1.600" />
            <path d="M11 6.500h64" stroke="#a5a4a3" />
            <path d="M41.500 3.500h2v6h-2z" stroke="#444" fill="#fff" />
          </svg>
        </StatusCell>
        <StatusCell $w={32} $open>100%</StatusCell>
      </StatusBar>
    </Window>
  );
}
